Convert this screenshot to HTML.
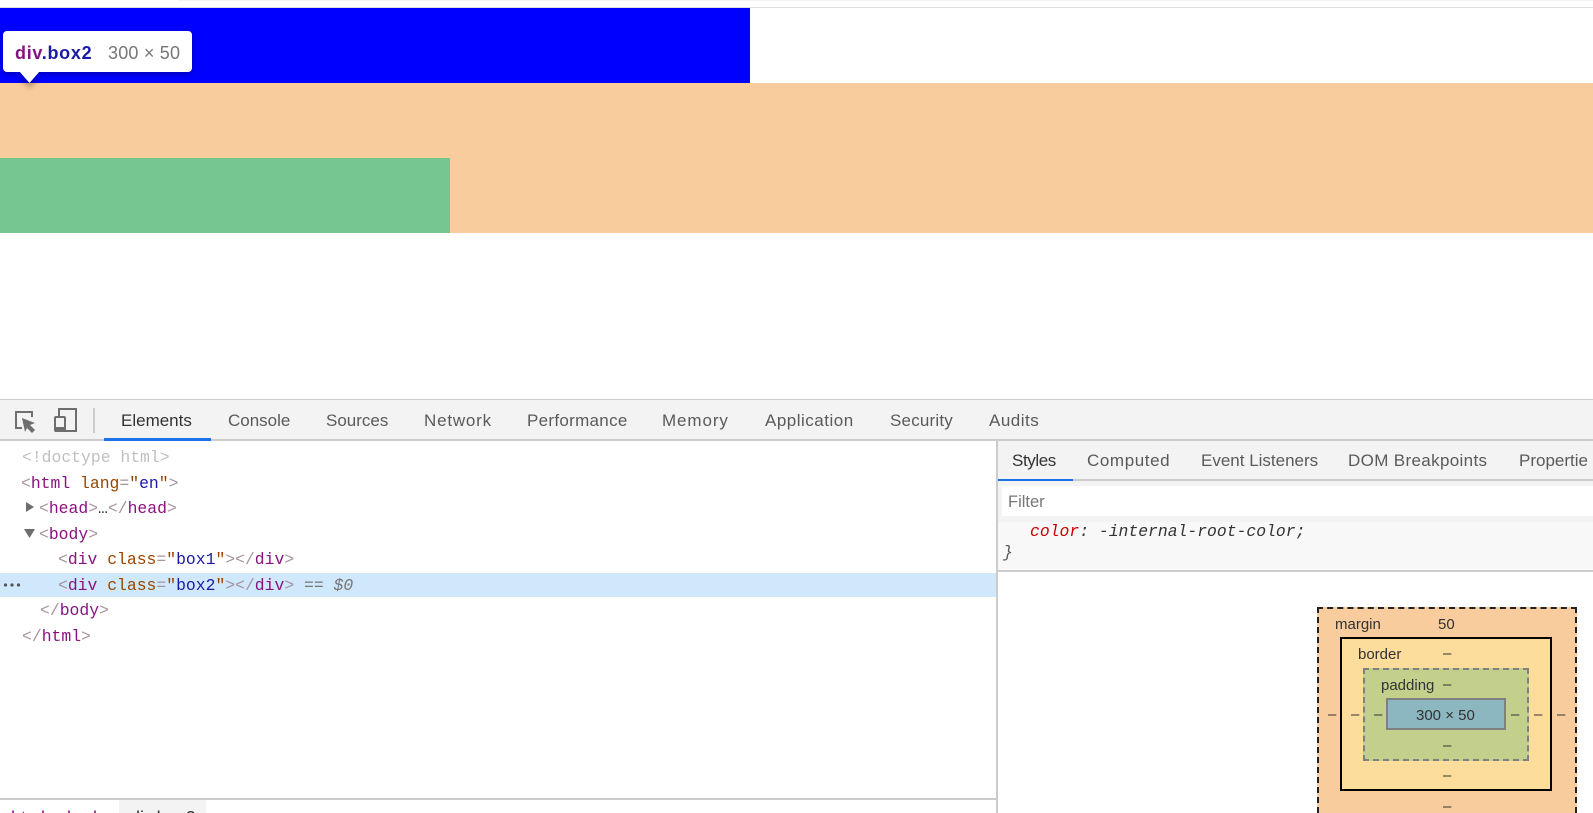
<!DOCTYPE html>
<html lang="en"><head><meta charset="utf-8"><title>DevTools</title>
<style>
html,body{margin:0;padding:0;width:1593px;height:813px;overflow:hidden;background:#fff}
body{position:relative;font-family:"Liberation Sans",sans-serif}
.a{position:absolute}
.t{position:absolute;white-space:pre;font-size:17px;line-height:22px;color:#5a5a5a}
.m{position:absolute;white-space:pre;font-family:"Liberation Mono",monospace;font-size:16.4px;line-height:22px;color:#a8939f}
.m i{font-style:normal}
.n{color:#881280}.k{color:#994500}.v{color:#1a1aa6}
.b{position:absolute;white-space:pre;font-size:15px;line-height:18px;color:#333;text-align:center}
</style></head><body>
<div class="a" style="left:178px;top:0;width:1415px;height:1px;background:#f3f3f3"></div>
<div class="a" style="left:0;top:7px;width:1593px;height:1px;background:#ddd"></div>
<div class="a" style="left:0;top:8px;width:750px;height:75px;background:#00f"></div>
<div class="a" style="left:0;top:83px;width:1593px;height:150px;background:#f9cc9d"></div>
<div class="a" style="left:0;top:158px;width:450px;height:75px;background:#76c68f"></div>

<svg class="a" style="left:0;top:60px;overflow:visible" width="200" height="40"><defs><filter id="s" x="-50%" y="-50%" width="200%" height="200%"><feGaussianBlur stdDeviation="3"/></filter></defs><path d="M19 14L40 14L29.500 25Z" transform="translate(0 3)" fill="#000" opacity=".3" filter="url(#s)"/></svg>
<div class="a" style="left:3px;top:31px;width:189px;height:41px;border-radius:4px;background:#fff;box-shadow:0 2px 6px rgba(0,0,0,.3)"></div>
<svg class="a" style="left:0;top:70px" width="60" height="16"><path d="M19 1L40 1L29.500 13Z" fill="#fff"/></svg>
<div class="t" style="left:15px;top:42px;font-weight:bold;font-size:18px;letter-spacing:.7px;color:#881280">div<span style="color:#1a1aa6">.box2</span></div>
<div class="t" style="left:108px;top:42px;font-size:18px;letter-spacing:.2px;color:#777">300 × 50</div>

<div class="a" style="left:0;top:399px;width:1593px;height:42px;background:#f3f3f3;border-top:1px solid #ccc;box-sizing:border-box;border-bottom:2px solid #ccc"></div>
<div class="a" style="left:104px;top:438px;width:107px;height:3px;background:#1a73e8"></div>
<svg class="a" style="left:0;top:400px" width="100" height="40" viewBox="0 0 100 40">
<path d="M22 28H16V12H32V17" fill="none" stroke="#6e6e6e" stroke-width="2"/>
<path d="M22 18L35 23L30 25L35 30L32 33L27 28L25 32Z" fill="#6e6e6e"/>
<path d="M59 16V9H76V31H65" fill="none" stroke="#6e6e6e" stroke-width="2"/>
<rect x="55" y="17" width="10" height="14" rx="1" fill="none" stroke="#6e6e6e" stroke-width="2"/>
<rect x="55" y="27" width="10" height="5" fill="#6e6e6e"/>
<rect x="93" y="8" width="2" height="25" fill="#ccc"/>
</svg>
<div class="t" style="left:121px;top:410px;color:#333">Elements</div>
<div class="t" style="left:228px;top:410px">Console</div>
<div class="t" style="left:326px;top:410px">Sources</div>
<div class="t" style="left:424px;top:410px;letter-spacing:.8px">Network</div>
<div class="t" style="left:527px;top:410px;letter-spacing:.3px">Performance</div>
<div class="t" style="left:662px;top:410px;letter-spacing:.9px">Memory</div>
<div class="t" style="left:765px;top:410px;letter-spacing:.5px">Application</div>
<div class="t" style="left:890px;top:410px;letter-spacing:.2px">Security</div>
<div class="t" style="left:989px;top:410px;letter-spacing:.5px">Audits</div>

<div class="a" style="left:0;top:573px;width:996px;height:24px;background:#cfe8fc"></div>
<div class="m" style="left:22px;top:447px;color:#c0c0c0">&lt;!doctype html&gt;</div>
<div class="m" style="left:21px;top:473px">&lt;<i class="n">html</i> <i class="k">lang</i>=<i class="k">"</i><i class="v">en</i><i class="k">"</i>&gt;</div>
<svg class="a" style="left:25px;top:502px" width="12" height="12"><path d="M1 0L9 5L1 10Z" fill="#6e6e6e"/></svg>
<div class="m" style="left:39px;top:498px">&lt;<i class="n">head</i>&gt;<span style="color:#333">…</span>&lt;/<i class="n">head</i>&gt;</div>
<svg class="a" style="left:24px;top:528px" width="12" height="12"><path d="M0 1H11L5.500 10Z" fill="#6e6e6e"/></svg>
<div class="m" style="left:39px;top:524px">&lt;<i class="n">body</i>&gt;</div>
<div class="m" style="left:58px;top:549px">&lt;<i class="n">div</i> <i class="k">class</i>=<i class="k">"</i><i class="v">box1</i><i class="k">"</i>&gt;&lt;/<i class="n">div</i>&gt;</div>
<div class="m" style="left:58px;top:575px">&lt;<i class="n">div</i> <i class="k">class</i>=<i class="k">"</i><i class="v">box2</i><i class="k">"</i>&gt;&lt;/<i class="n">div</i>&gt; <span style="color:#777">== <em>$0</em></span></div>
<svg class="a" style="left:3px;top:582px" width="18" height="6"><circle cx="2.500" cy="3" r="1.600" fill="#555"/><circle cx="9" cy="3" r="1.600" fill="#555"/><circle cx="15.500" cy="3" r="1.600" fill="#555"/></svg>
<div class="m" style="left:40px;top:600px">&lt;/<i class="n">body</i>&gt;</div>
<div class="m" style="left:22px;top:626px">&lt;/<i class="n">html</i>&gt;</div>

<div class="a" style="left:0;top:798px;width:996px;height:2px;background:#ccc"></div>
<div class="a" style="left:119px;top:800px;width:87px;height:13px;background:#f3f3f3"></div>
<div class="t" style="left:11px;top:807px;font-size:18px;color:#881280">html</div>
<div class="t" style="left:67px;top:807px;font-size:18px;color:#881280">body</div>
<div class="t" style="left:130px;top:807px;font-size:18px;color:#333">div.box2</div>

<div class="a" style="left:997px;top:441px;width:596px;height:40px;background:#f3f3f3;border-bottom:2px solid #ccc;box-sizing:border-box"></div>
<div class="a" style="left:998px;top:479px;width:75px;height:2px;background:#1a73e8"></div>
<div class="a" style="left:997px;top:481px;width:596px;height:41px;background:#f3f3f3"></div>
<div class="a" style="left:997px;top:522px;width:596px;height:49px;background:#f8f8f8"></div>
<div class="a" style="left:1002px;top:486px;width:591px;height:30px;background:#fff"></div>
<div class="a" style="left:997px;top:570px;width:596px;height:2px;background:#ccc"></div>
<div class="a" style="left:996px;top:440px;width:2px;height:373px;background:#ccc"></div>
<div class="t" style="left:1012px;top:450px;color:#333;letter-spacing:-.4px">Styles</div>
<div class="t" style="left:1087px;top:450px;letter-spacing:.6px">Computed</div>
<div class="t" style="left:1201px;top:450px">Event Listeners</div>
<div class="t" style="left:1348px;top:450px;letter-spacing:.35px">DOM Breakpoints</div>
<div class="t" style="left:1519px;top:450px">Propertie</div>
<div class="t" style="left:1008px;top:491px;color:#777;font-size:16.500px">Filter</div>
<div class="m" style="left:1030px;top:521px;color:#333;font-style:italic"><span style="color:#c80000">color</span>: -internal-root-color;</div>
<div class="m" style="left:1003px;top:542px;color:#555;font-style:italic">}</div>

<div class="a" style="left:1317px;top:607px;width:260px;height:206px;background:#f9cc9d;border:2px dashed #222;border-bottom:0;box-sizing:border-box"></div>
<div class="a" style="left:1340px;top:637px;width:212px;height:154px;background:#fddd9b;border:2px solid #000;box-sizing:border-box"></div>
<div class="a" style="left:1363px;top:668px;width:166px;height:93px;background:#c3d08b;border:2px dashed #808080;box-sizing:border-box"></div>
<div class="a" style="left:1386px;top:698px;width:120px;height:32px;background:#8cb6c0;border:2px solid #808080;box-sizing:border-box"></div>
<div class="b" style="left:1335px;top:616px">margin</div>
<div class="b" style="left:1438px;top:616px">50</div>
<div class="b" style="left:1358px;top:646px">border</div>
<div class="b" style="left:1381px;top:677px">padding</div>
<div class="b" style="left:1416px;top:707px">300 × 50</div>
<div class="b" style="left:1443px;top:645px">–</div>
<div class="b" style="left:1443px;top:676px">–</div>
<div class="b" style="left:1443px;top:737px">–</div>
<div class="b" style="left:1443px;top:767px">–</div>
<div class="b" style="left:1443px;top:798px">–</div>
<div class="b" style="left:1328px;top:706px">–</div>
<div class="b" style="left:1351px;top:706px">–</div>
<div class="b" style="left:1374px;top:706px">–</div>
<div class="b" style="left:1511px;top:706px">–</div>
<div class="b" style="left:1534px;top:706px">–</div>
<div class="b" style="left:1557px;top:706px">–</div>
</body></html>
